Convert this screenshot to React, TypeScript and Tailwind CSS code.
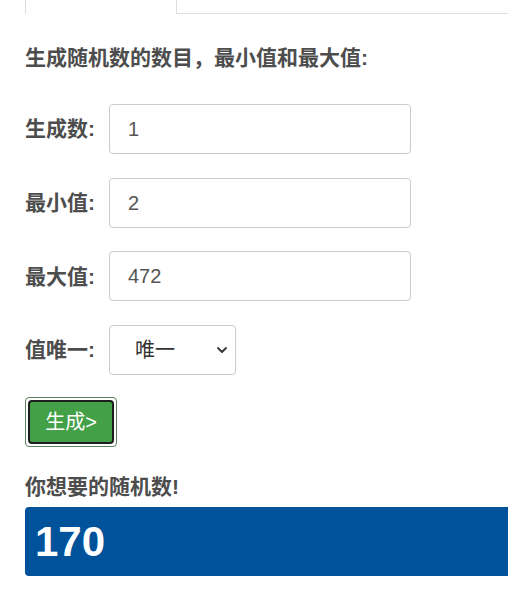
import { ChevronDown } from 'lucide-react';

const rows = [
  { label: '生成数:', value: '1' },
  { label: '最小值:', value: '2' },
  { label: '最大值:', value: '472' },
];

const font = { fontFamily: '"Liberation Sans", "Noto Sans CJK SC", sans-serif' };

export default function App() {
  return (
    <div className="h-[598px] w-[508px] overflow-hidden bg-white text-[#4d4d4d]" style={font}>
      <div className="w-[540px] pl-[25px]">
        <div className="flex h-[14px]">
          <div className="h-[14px] w-[152px] border-x border-[#ddd]" />
          <div className="h-[14px] flex-1 border-b border-[#ddd]" />
        </div>

        <h2 className="mt-[33px] text-[21px] font-bold leading-[22px]">生成随机数的数目，最小值和最大值:</h2>

        <div className="mt-[35px] flex flex-col gap-[23.67px]">
          {rows.map((row) => (
            <div key={row.label} className="flex items-center">
              <label className="w-[84px] text-[21px] font-bold">{row.label}</label>
              <div className="flex h-[50px] w-[302px] items-center rounded border border-[#ccc] pl-[18px] text-[20px] text-[#555]">
                {row.value}
              </div>
            </div>
          ))}
          <div className="flex items-center">
            <label className="w-[84px] text-[21px] font-bold">值唯一:</label>
            <div className="flex h-[50px] w-[127px] items-center justify-between rounded border border-[#ccc] pl-[25px] pr-[5px] text-[20px] text-[#333]">
              <span>唯一</span>
              <ChevronDown size={16} strokeWidth={2.75} className="text-[#333]" />
            </div>
          </div>
        </div>

        <div className="mt-[22px] inline-flex rounded border border-[#5d7f5d] p-[2px]">
          <button className="flex h-[44px] w-[86px] items-center justify-center rounded border-2 border-[#1e1e1e] bg-[#43a047] text-[20px] text-white">
            生成&gt;
          </button>
        </div>

        <h3 className="mt-[29px] text-[21px] font-bold leading-[22px]">你想要的随机数!</h3>

        <div className="mt-[9px] flex h-[69px] items-center rounded bg-[#00529b] pl-[10px] text-[42px] font-bold text-white">
          170
        </div>
      </div>
    </div>
  );
}
